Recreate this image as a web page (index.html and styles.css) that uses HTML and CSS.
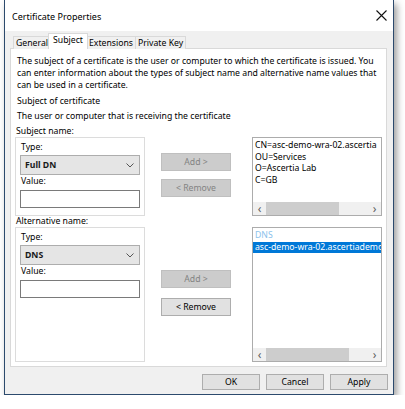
FILE: index.html
```html
<!DOCTYPE html>
<html lang="en">
<head>
  <meta charset="UTF-8">
  <meta name="viewport" content="width=device-width, initial-scale=1.0">
  <title>Certificate Properties</title>
  <link rel="stylesheet" href="styles.css">
</head>
<body>

  <div class="window">
    <!-- Title bar -->
    <div class="titlebar">
      <span class="title">Certificate Properties</span>
      <svg class="close" width="11" height="11" viewBox="0 0 11 11">
        <path d="M0.5 0.5 L10.5 10.5 M10.5 0.5 L0.5 10.5" stroke="#111" stroke-width="1.1" fill="none"/>
      </svg>
    </div>

    <!-- Tabs -->
    <div class="tabs">
      <div class="tab">General</div>
      <div class="tab active">Subject</div>
      <div class="tab">Extensions</div>
      <div class="tab">Private Key</div>
    </div>

    <div class="panel">
      <p class="intro">The subject of a certificate is the user or computer to which the certificate is issued. You can enter information about the types of subject name and alternative name values that can be used in a certificate.</p>
      <p class="heading">Subject of certificate</p>
      <p class="hint">The user or computer that is receiving the certificate</p>

      <!-- Subject name -->
      <div class="section-label">Subject name:</div>
      <div class="name-row">
        <div class="group">
          <div class="field-label">Type:</div>
          <div class="select">Full DN
            <svg class="chevron" width="8" height="5" viewBox="0 0 8 5"><path d="M0.5 0.5 L4 4 L7.5 0.5" stroke="#555" fill="none"/></svg>
          </div>
          <div class="field-label">Value:</div>
          <div class="input"></div>
        </div>
        <div class="actions first">
          <button class="btn disabled">Add &gt;</button>
          <button class="btn disabled">&lt; Remove</button>
        </div>
        <div class="list">
          <div class="list-items">
            <div class="item">CN=asc-demo-wra-02.ascertia</div>
            <div class="item">OU=Services</div>
            <div class="item">O=Ascertia Lab</div>
            <div class="item">C=GB</div>
          </div>
          <div class="hscroll">
            <span class="arrow">&lsaquo;</span>
            <span class="track"><span class="thumb short"></span></span>
            <span class="arrow">&rsaquo;</span>
          </div>
        </div>
      </div>

      <!-- Alternative name -->
      <div class="section-label alt">Alternative name:</div>
      <div class="name-row tall">
        <div class="group">
          <div class="field-label">Type:</div>
          <div class="select">DNS
            <svg class="chevron" width="8" height="5" viewBox="0 0 8 5"><path d="M0.5 0.5 L4 4 L7.5 0.5" stroke="#555" fill="none"/></svg>
          </div>
          <div class="field-label">Value:</div>
          <div class="input"></div>
        </div>
        <div class="actions second">
          <button class="btn disabled">Add &gt;</button>
          <button class="btn">&lt; Remove</button>
        </div>
        <div class="list">
          <div class="list-items">
            <div class="item group-head">DNS</div>
            <div class="item selected">asc-demo-wra-02.ascertiademo.com</div>
          </div>
          <div class="hscroll">
            <span class="arrow">&lsaquo;</span>
            <span class="track"><span class="thumb long"></span></span>
            <span class="arrow">&rsaquo;</span>
          </div>
        </div>
      </div>
    </div>

    <!-- Dialog buttons -->
    <div class="footer">
      <button class="btn dlg">OK</button>
      <button class="btn dlg">Cancel</button>
      <button class="btn dlg">Apply</button>
    </div>
  </div>

</body>
</html>
```

FILE: styles.css
```css
* {
  box-sizing: border-box;
}

body {
  margin: 0;
  padding: 0 0 0 4px;
  background-color: #ffffff;
  font-family: 'Noto Sans', sans-serif;
  font-size: 8.7px;
  color: #000;
}

.window {
  width: 390px;
  height: 395px;
  border: 1px solid #2c4a6d;
  border-top: none;
  background-color: #f0f0f0;
  box-shadow: 3px 4px 7px rgba(0, 0, 0, 0.38);
  display: flex;
  flex-direction: column;
}

/* Title bar */
.titlebar {
  height: 31px;
  background-color: #fff;
  display: flex;
  align-items: center;
  justify-content: space-between;
  padding: 0 6px 0 7px;
  flex-shrink: 0;
}

.title {
  font-size: 9px;
  margin-top: 1px;
}

/* Tabs */
.tabs {
  display: flex;
  align-items: flex-end;
  height: 17px;
  padding-left: 8px;
  flex-shrink: 0;
}

.tab {
  position: relative;
  height: 13px;
  line-height: 12px;
  padding: 0 2px;
  border: 1px solid #d9d9d9;
  border-bottom: none;
  margin-bottom: -1px;
  margin-right: -1px;
  background-color: #f0f0f0;
}

.tab.active {
  height: 16px;
  line-height: 13px;
  background-color: #fff;
  padding: 0 4px;
  margin-left: -2px;
  margin-right: -2px;
  z-index: 1;
}

/* Tab page */
.panel {
  margin: 0 6px 0 5px;
  height: 319px;
  background-color: #fff;
  border: 1px solid #d9d9d9;
  padding: 6px 4px 0 4px;
  flex-shrink: 0;
}

.panel p {
  margin: 0;
  line-height: 12px;
}

.intro {
  padding-left: 2px;
  padding-right: 2px;
}

.heading {
  padding-left: 2px;
  margin-top: 4px !important;
}

.hint {
  padding-left: 2px;
  margin-top: 3px !important;
}

.section-label {
  line-height: 12px;
  margin-top: 3px;
  padding-left: 1px;
}

.section-label.alt {
  margin-top: 0;
  line-height: 11px;
}

.name-row {
  display: flex;
  height: 79px;
}

.name-row.tall {
  height: 135px;
}

/* Group boxes */
.group {
  width: 130px;
  border: 1px solid #dcdcdc;
  padding: 3px 4px 0 4px;
}

.field-label {
  line-height: 12px;
  padding-left: 1px;
}

.select {
  height: 20px;
  margin-top: 2px;
  border: 1px solid #adadad;
  background-color: #e5e5e5;
  display: flex;
  align-items: center;
  justify-content: space-between;
  padding: 0 5px 0 4px;
  font-weight: 700;
  color: #1a1a1a;
}

.input {
  height: 18px;
  margin-top: 3px;
  border: 1px solid #7a7a7a;
  background-color: #fff;
}

/* Add / Remove buttons */
.actions {
  display: flex;
  flex-direction: column;
  gap: 8px;
  margin-left: 16px;
  margin-right: 21px;
}

.actions.first {
  padding-top: 16px;
}

.actions.second {
  padding-top: 43px;
  gap: 10px;
}

.btn {
  font-family: inherit;
  font-size: 8.7px;
  height: 18px;
  width: 70px;
  padding: 0;
  border: 1px solid #adadad;
  background-color: #e1e1e1;
  color: #000;
}

.btn.disabled {
  background-color: #cccccc;
  border-color: #bfbfbf;
  color: #838383;
}

/* List boxes */
.list {
  width: 130px;
  border: 1px solid #acacac;
  display: flex;
  flex-direction: column;
  background-color: #fff;
}

.list-items {
  flex: 1;
  overflow: hidden;
  white-space: nowrap;
  padding-top: 2px;
}

.item {
  line-height: 11.5px;
  padding-left: 2px;
}

.item.group-head {
  color: #8cc2ec;
}

.item.selected {
  background-color: #0078d7;
  color: #fff;
}

.hscroll {
  height: 13px;
  display: flex;
  align-items: center;
  background-color: #f0f0f0;
  flex-shrink: 0;
}

.arrow {
  width: 13px;
  text-align: center;
  font-size: 12px;
  line-height: 13px;
  color: #606060;
}

.track {
  flex: 1;
  height: 13px;
}

.thumb {
  display: block;
  height: 13px;
  background-color: #cdcdcd;
}

.thumb.short {
  width: 73px;
}

.thumb.long {
  width: 83px;
}

/* Footer buttons */
.footer {
  display: flex;
  justify-content: flex-end;
  gap: 6px;
  padding: 7px 5px 0 0;
}

.btn.dlg {
  width: 58px;
  height: 16px;
}
```
